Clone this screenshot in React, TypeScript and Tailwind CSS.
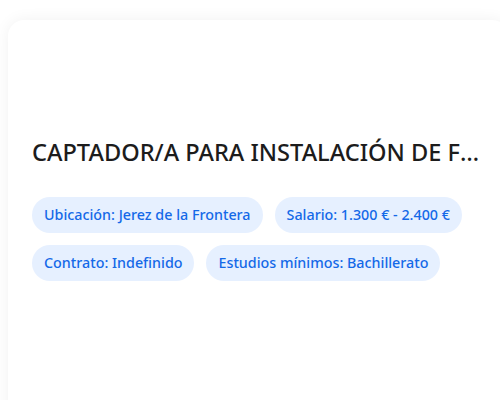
const tags = [
  "Ubicación: Jerez de la Frontera",
  "Salario: 1.300 € - 2.400 €",
  "Contrato: Indefinido",
  "Estudios mínimos: Bachillerato",
];

export default function App() {
  return (
    <div className="h-[400px] w-[500px] overflow-hidden bg-white font-['Noto_Sans',sans-serif]">
      <div className="ml-2 mt-5 h-[420px] w-[500px] rounded-2xl bg-white px-6 pt-[114px] shadow-[0_0_16px_rgba(0,0,0,0.06)]">
        <h2 className="truncate text-[23.6px] font-medium leading-[36px] text-[#1c1c1c]">
          CAPTADOR/A PARA INSTALACIÓN DE FIBRA ÓPTICA
        </h2>
        <div className="mt-[27px] flex flex-wrap gap-3">
          {tags.map((tag) => (
            <span
              key={tag}
              className="rounded-full bg-[#e6f0ff] px-3 py-2 text-[14.3px] font-medium leading-5 text-[#1469e8]"
            >
              {tag}
            </span>
          ))}
        </div>
      </div>
    </div>
  );
}
